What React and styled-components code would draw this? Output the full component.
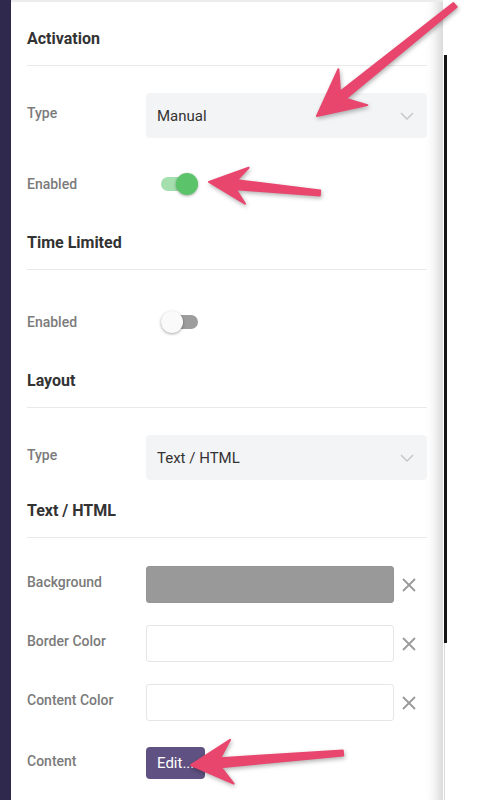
import React from 'react';
import styled, { createGlobalStyle } from 'styled-components';

const GlobalStyle = createGlobalStyle`
  html, body {
    margin: 0;
    padding: 0;
    background: #fff;
  }
  body {
    font-family: Roboto, "Liberation Sans", Arial, sans-serif;
  }
`;

const Page = styled.div`
  position: relative;
  display: flex;
  width: 479px;
  height: 800px;
  overflow: hidden;
  background: #fff;
`;

const Rail = styled.div`
  width: 11px;
  flex: none;
  background: #30294e;
`;

const Panel = styled.div`
  width: 432px;
  flex: none;
  box-sizing: border-box;
  padding: 0 16px;
  border-top: 2px solid #ececec;
  background: #fff;
  box-shadow: inset -18px 0 14px -14px rgba(0, 0, 0, 0.2);
`;

const SectionTitle = styled.h3`
  margin: ${(p) => p.$gap}px 0 0;
  padding-bottom: 16px;
  border-bottom: 1px solid #e9e9e9;
  font-size: 16px;
  line-height: 20px;
  font-weight: 700;
  color: #333;
`;

const Row = styled.div`
  display: flex;
  align-items: center;
  margin-top: ${(p) => p.$gap}px;
  height: ${(p) => p.$h}px;
`;

const Label = styled.div`
  width: 119px;
  flex: none;
  margin-bottom: ${(p) => (p.$flat ? 0 : 5)}px;
  font-size: 14px;
  font-weight: 500;
  color: #7b7b7b;
`;

const Select = styled.div`
  flex: 1;
  height: 100%;
  box-sizing: border-box;
  display: flex;
  align-items: center;
  justify-content: space-between;
  padding: 0 13px 0 11px;
  background: #f3f4f6;
  border-radius: 4px;
  font-size: 15px;
  color: #333;
`;

const Switch = styled.div`
  position: relative;
  width: 37px;
  height: 14px;
  margin-left: 15px;
  border-radius: 7px;
  background: ${(p) => (p.$on ? '#a4dfad' : '#9d9d9d')};
`;

const Knob = styled.div`
  position: absolute;
  top: -4px;
  left: ${(p) => (p.$on ? '15px' : '0')};
  width: 22px;
  height: 22px;
  border-radius: 50%;
  background: ${(p) => (p.$on ? '#5bc46a' : '#fafafa')};
  box-shadow: 0 1px 3px rgba(0, 0, 0, 0.35);
`;

const ColorBox = styled.div`
  width: 248px;
  height: 100%;
  box-sizing: border-box;
  border-radius: 3px;
  border: 1px solid ${(p) => (p.$color ? '#949494' : '#e6e6e6')};
  background: ${(p) => p.$color || '#fff'};
`;

const ClearButton = styled.div`
  width: 30px;
  display: flex;
  justify-content: center;
  align-items: center;
`;

const EditButton = styled.button`
  height: 32px;
  padding: 0 11px;
  border: none;
  border-radius: 4px;
  background: #5f5181;
  color: #fff;
  font-family: Roboto, "Liberation Sans", Arial, sans-serif;
  font-size: 15px;
`;

const ScrollGutter = styled.div`
  flex: 1;
  display: flex;
  flex-direction: column;
  padding-top: 55px;
  padding-left: 1px;
`;

const ScrollThumb = styled.div`
  width: 3px;
  height: 588px;
  background: #151515;
`;

const ScrollTrack = styled.div`
  width: 1px;
  flex: 1;
  background: #d9d9d9;
`;

const Overlay = styled.svg`
  position: absolute;
  left: 0;
  top: 0;
  width: 479px;
  height: 800px;
  pointer-events: none;
  filter: drop-shadow(1px 2px 2px rgba(0, 0, 0, 0.3));
`;

const Chevron = () => (
  <svg width="14" height="8" viewBox="0 0 14 8">
    <polyline points="1,1 7,7 13,1" fill="none" stroke="#c8c8c8" strokeWidth="1.5" />
  </svg>
);

const Cross = () => (
  <svg width="14" height="14" viewBox="0 0 14 14">
    <path d="M1 1 L13 13 M13 1 L1 13" stroke="#9a9a9a" strokeWidth="1.8" />
  </svg>
);

// skitch-like arrow: tapered shaft with a wide head
function arrowPoints([tx, ty], [px, py], L, W, w0, w1) {
  const dx = px - tx;
  const dy = py - ty;
  const len = Math.hypot(dx, dy);
  const ux = dx / len;
  const uy = dy / len;
  const nx = -uy;
  const ny = ux;
  const at = (d, o) => [px - ux * d + nx * o, py - uy * d + ny * o];
  const pts = [
    [tx + (nx * w0) / 2, ty + (ny * w0) / 2],
    at(L * 0.72, w1 / 2),
    at(L, W),
    [px, py],
    at(L, -W),
    at(L * 0.72, -w1 / 2),
    [tx - (nx * w0) / 2, ty - (ny * w0) / 2],
  ];
  return pts.map((p) => p.map((v) => v.toFixed(1)).join(',')).join(' ');
}

const arrows = [
  { tail: [455, 5], tip: [317, 116], L: 46, W: 23 },
  { tail: [320, 193], tip: [209, 182], L: 38, W: 18 },
  { tail: [343, 753], tip: [191, 765], L: 41, W: 22 },
];

function ColorRow({ label, color, gap }) {
  return (
    <Row $gap={gap} $h={37}>
      <Label>{label}</Label>
      <ColorBox $color={color} />
      <ClearButton>
        <Cross />
      </ClearButton>
    </Row>
  );
}

export default function App() {
  return (
    <Page>
      <GlobalStyle />
      <Rail />
      <Panel>
        <SectionTitle $gap={27}>Activation</SectionTitle>
        <Row $gap={27} $h={45}>
          <Label>Type</Label>
          <Select>
            Manual
            <Chevron />
          </Select>
        </Row>
        <Row $gap={34} $h={24}>
          <Label $flat>Enabled</Label>
          <Switch $on>
            <Knob $on />
          </Switch>
        </Row>

        <SectionTitle $gap={37}>Time Limited</SectionTitle>
        <Row $gap={40} $h={24}>
          <Label $flat>Enabled</Label>
          <Switch>
            <Knob />
          </Switch>
        </Row>

        <SectionTitle $gap={37}>Layout</SectionTitle>
        <Row $gap={27} $h={45}>
          <Label>Type</Label>
          <Select>
            Text / HTML
            <Chevron />
          </Select>
        </Row>

        <SectionTitle $gap={21}>Text / HTML</SectionTitle>
        <ColorRow label="Background" color="#999999" gap={28} />
        <ColorRow label="Border Color" gap={22} />
        <ColorRow label="Content Color" gap={22} />
        <Row $gap={26} $h={32}>
          <Label>Content</Label>
          <EditButton>Edit...</EditButton>
        </Row>
      </Panel>
      <ScrollGutter>
        <ScrollThumb />
        <ScrollTrack />
      </ScrollGutter>
      <Overlay viewBox="0 0 479 800">
        {arrows.map((a, i) => (
          <polygon
            key={i}
            points={arrowPoints(a.tail, a.tip, a.L, a.W, 5, 9)}
            fill="#e9466e"
            stroke="#e9466e"
            strokeWidth="2"
            strokeLinejoin="round"
          />
        ))}
      </Overlay>
    </Page>
  );
}
